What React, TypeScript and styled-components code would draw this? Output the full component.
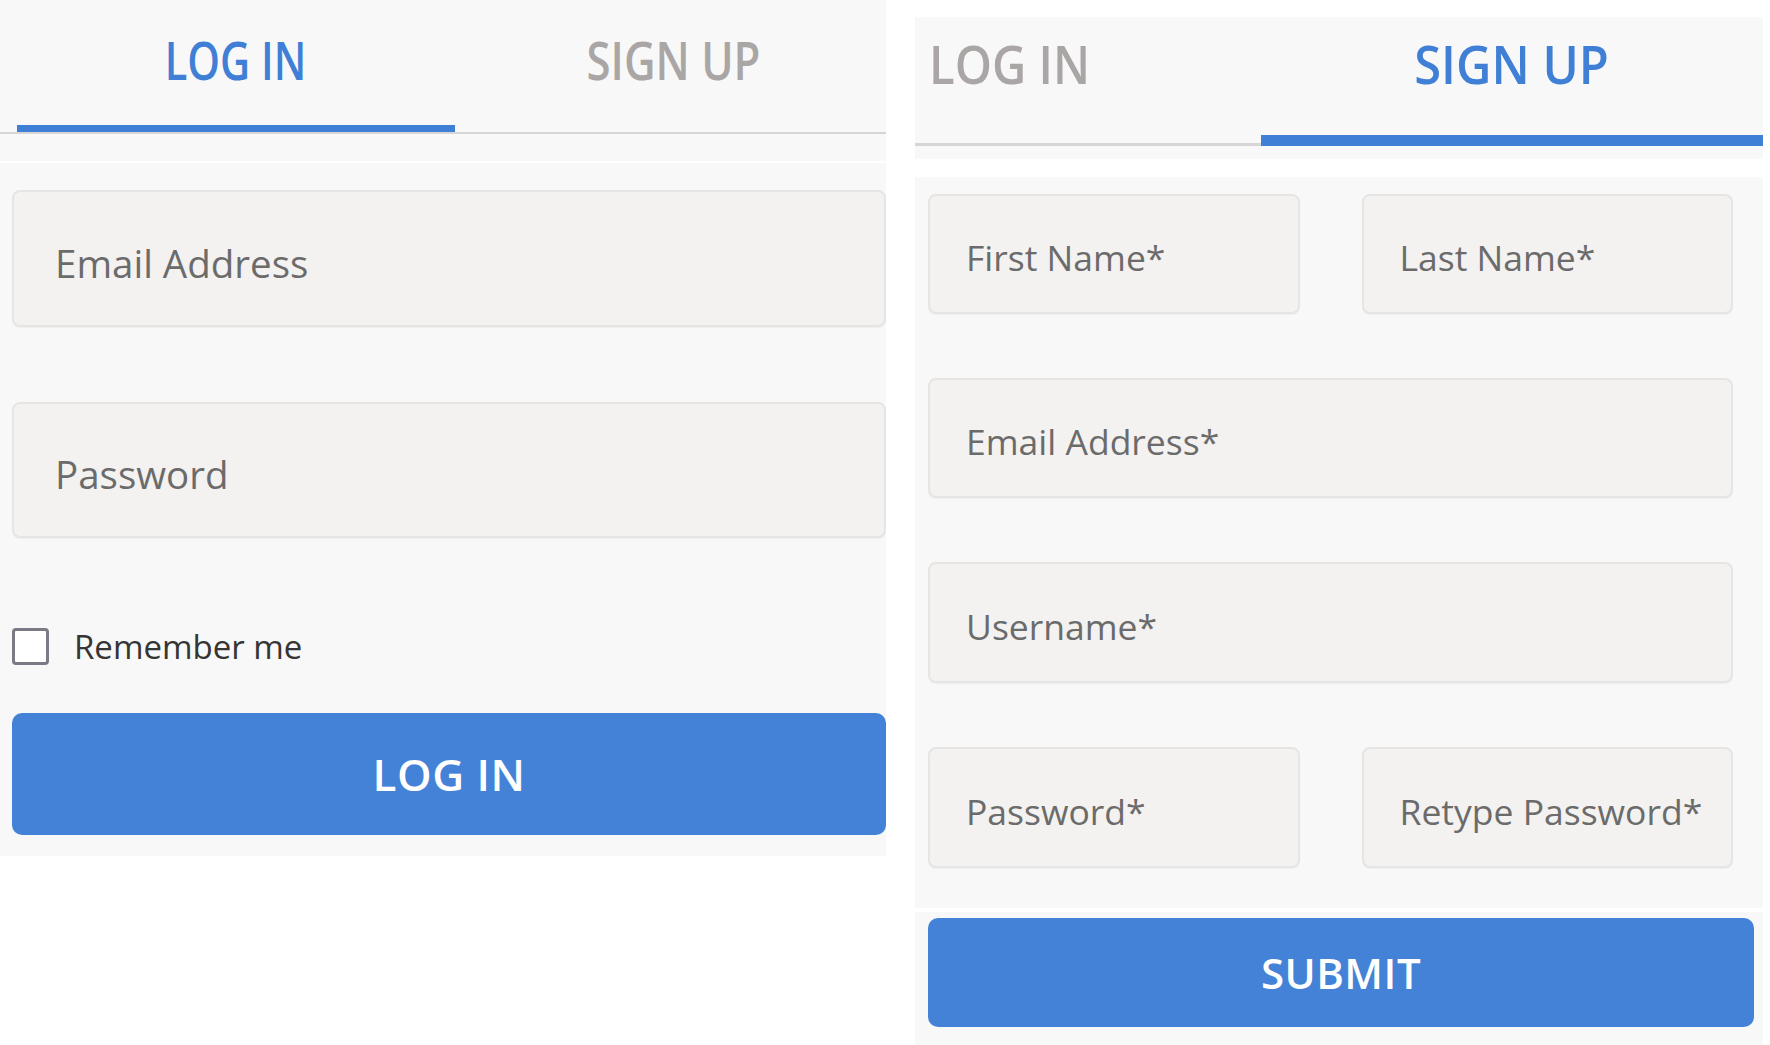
import React, {FC} from 'react';
import styled, {createGlobalStyle} from 'styled-components';

const GlobalStyle = createGlobalStyle`
	html, body {
		margin: 0;
		padding: 0;
		background: #fff;
	}
	body {
		font-family: "Open Sans", "Noto Sans", Arial, sans-serif;
	}
`;

const BLUE = '#3f7fd5';
const PANEL = '#f8f8f8';

const Page = styled.div`
	display: flex;
	align-items: flex-start;
	gap: 29px;
	width: 1770px;
	height: 1045px;
	overflow: hidden;
`;

const Panel = styled.div<{$width: number; $top: number}>`
	display: flex;
	flex-direction: column;
	width: ${p => p.$width}px;
	margin-top: ${p => p.$top}px;
`;

const Header = styled.div<{$height: number}>`
	height: ${p => p.$height}px;
	background: ${PANEL};
`;

const TabBar = styled.div<{$pad: number; $line: boolean}>`
	display: flex;
	padding-left: ${p => p.$pad}px;
	border-bottom: ${p => p.$line ? '2px solid #d6d6d6' : 'none'};
	overflow: hidden;
`;

const Tab = styled.div<{$active?: boolean; $w: number; $h: number; $top: number; $bar: number; $rest: number}>`
	flex: 0 0 ${p => p.$w}px;
	height: ${p => p.$h}px;
	box-sizing: border-box;
	padding-top: ${p => p.$top}px;
	text-align: center;
	border-bottom: ${p => p.$active ? `${p.$bar}px solid ${BLUE}` : p.$rest ? `${p.$rest}px solid #d6d6d6` : `${p.$bar}px solid transparent`};
`;

const TabLabel = styled.span<{$active?: boolean; $sx: number}>`
	display: inline-block;
	font-size: 52px;
	line-height: 1;
	font-weight: 600;
	color: ${p => p.$active ? BLUE : '#aba6a6'};
	transform: scaleX(${p => p.$sx});
	transform-origin: center;
`;

const Form = styled.div<{$pad: string}>`
	display: flex;
	flex-direction: column;
	background: ${PANEL};
	padding: ${p => p.$pad};
`;

const Field = styled.input<{$h: number; $size: number; $indent: number; $drop: number}>`
	display: block;
	width: 100%;
	height: ${p => p.$h}px;
	box-sizing: border-box;
	margin: 0;
	padding: ${p => p.$drop}px 0 0 ${p => p.$indent}px;
	border: 2px solid #e7e5e3;
	border-radius: 8px;
	background: #f3f2f0;
	box-shadow: 0 1px 1px rgba(0, 0, 0, 0.04);
	font-family: "Open Sans", "Noto Sans", Arial, sans-serif;
	font-size: ${p => p.$size}px;
	color: #555;
	outline: none;

	&::placeholder {
		color: #6b6b6b;
		opacity: 1;
	}
`;

const Row = styled.div<{$gap: number}>`
	display: grid;
	grid-template-columns: 1fr 1fr;
	column-gap: ${p => p.$gap}px;
`;

const Stack = styled.div<{$gap: number}>`
	display: flex;
	flex-direction: column;
	gap: ${p => p.$gap}px;
`;

const CheckRow = styled.label`
	display: flex;
	align-items: center;
	gap: 25px;
	margin-top: 86px;
	font-size: 33px;
	color: #353535;
`;

const Check = styled.input`
	appearance: none;
	margin: 0;
	width: 37px;
	height: 37px;
	box-sizing: border-box;
	border: 3px solid #7b7a85;
	border-radius: 4px;
	background: #fff;
`;

const Button = styled.button<{$h: number; $size: number; $top: number}>`
	display: block;
	width: 100%;
	height: ${p => p.$h}px;
	margin-top: ${p => p.$top}px;
	border: none;
	border-radius: 10px;
	background: #4382d6;
	color: #fff;
	font-family: "Open Sans", "Noto Sans", Arial, sans-serif;
	font-size: ${p => p.$size}px;
	font-weight: 600;
	letter-spacing: 0.5px;
	cursor: pointer;
`;

const Gap = styled.div<{$h: number}>`
	height: ${p => p.$h}px;
`;

const ButtonStrip = styled.div`
	background: ${PANEL};
	padding: 6px 9px 18px 13px;
	height: 133px;
	box-sizing: border-box;
`;

const LoginCard: FC = () =>
	<Panel $width={886} $top={0}>
		<Header $height={161}>
			<TabBar $pad={17} $line>
				<Tab $active $w={438} $h={132} $top={34} $bar={7} $rest={0}>
					<TabLabel $active $sx={0.8}>LOG IN</TabLabel>
				</Tab>
				<Tab $w={438} $h={132} $top={34} $bar={7} $rest={0}>
					<TabLabel $sx={0.84}>SIGN UP</TabLabel>
				</Tab>
			</TabBar>
		</Header>
		<Gap $h={2} />
		<Form $pad="27px 0 21px 12px">
			<Stack $gap={75}>
				<Field $h={137} $size={38.5} $indent={41} $drop={8} placeholder="Email Address" />
				<Field $h={136} $size={38.5} $indent={41} $drop={8} type="password" placeholder="Password" />
			</Stack>
			<CheckRow>
				<Check type="checkbox" />
				Remember me
			</CheckRow>
			<Button $h={122} $size={44} $top={44}>LOG IN</Button>
		</Form>
	</Panel>;

const SignupCard: FC = () =>
	<Panel $width={848} $top={17}>
		<Header $height={142}>
			<TabBar $pad={0} $line={false}>
				<Tab $w={502} $h={129} $top={21} $bar={11} $rest={3} style={{marginLeft: -156}}>
					<TabLabel $sx={0.91}>LOG IN</TabLabel>
				</Tab>
				<Tab $active $w={502} $h={129} $top={21} $bar={11} $rest={3}>
					<TabLabel $active $sx={0.94}>SIGN UP</TabLabel>
				</Tab>
			</TabBar>
		</Header>
		<Gap $h={18} />
		<Form $pad="17px 30px 40px 13px">
			<Stack $gap={64}>
				<Row $gap={62}>
					<Field $h={120} $size={35.5} $indent={36} $drop={6} placeholder="First Name*" />
					<Field $h={120} $size={35.5} $indent={36} $drop={6} placeholder="Last Name*" />
				</Row>
				<Field $h={120} $size={35.5} $indent={36} $drop={6} placeholder="Email Address*" />
				<Field $h={121} $size={35.5} $indent={36} $drop={6} placeholder="Username*" />
				<Row $gap={62}>
					<Field $h={121} $size={35.5} $indent={36} $drop={6} type="password" placeholder="Password*" />
					<Field $h={121} $size={35.5} $indent={36} $drop={6} type="password" placeholder="Retype Password*" />
				</Row>
			</Stack>
		</Form>
		<Gap $h={4} />
		<ButtonStrip>
			<Button $h={109} $size={42} $top={0}>SUBMIT</Button>
		</ButtonStrip>
	</Panel>;

const App: FC = () =>
	<>
		<GlobalStyle />
		<Page>
			<LoginCard />
			<SignupCard />
		</Page>
	</>;

export default App;
